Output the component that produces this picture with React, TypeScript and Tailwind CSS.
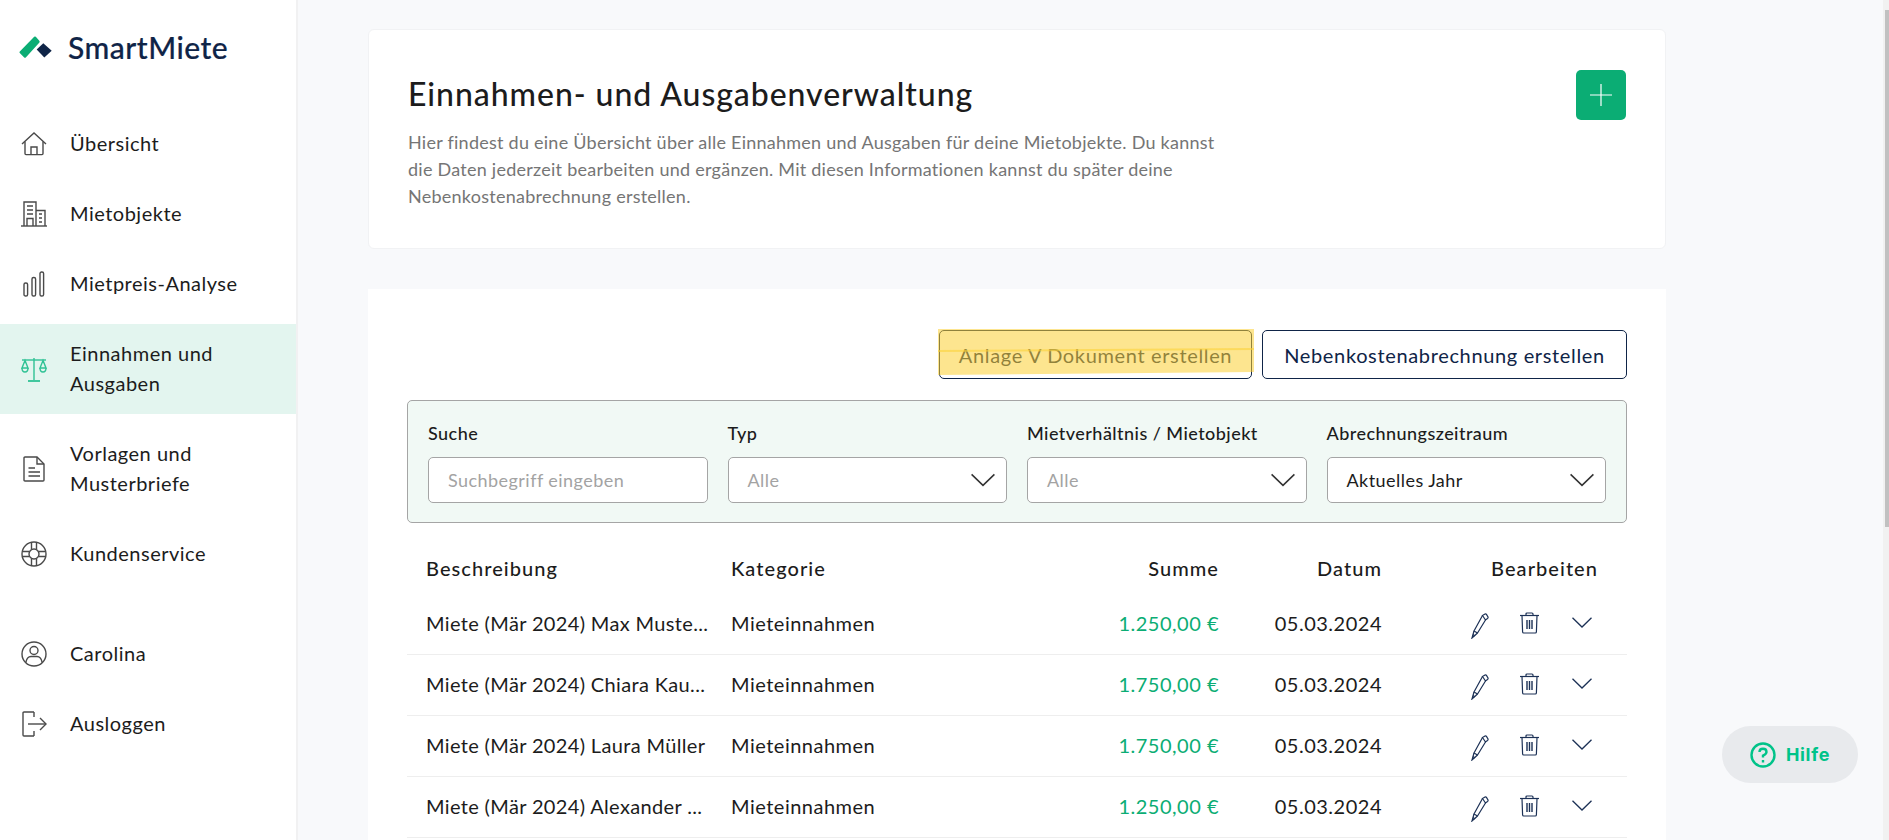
const font = "[font-family:Lato,'Noto_Sans',sans-serif]";

function Chevron({ className }: { className?: string }) {
  return (
    <svg viewBox="0 0 20 11" fill="none" stroke="currentColor" strokeWidth="1.3" className={className}>
      <path d="M0.5 0.8 L10 10 L19.5 0.8" />
    </svg>
  );
}

function HomeIcon() {
  return (
    <svg width="26" height="24" viewBox="0 0 26 24" fill="none" stroke="#4a4a4a" strokeWidth="1.4">
      <path d="M1 12 L13 1 L25 12" />
      <path d="M4 9.5 V21.5 Q4 22.6 5 22.6 H21 Q22 22.6 22 21.5 V9.5" />
      <path d="M10 22.6 V15 H16 V22.6" />
    </svg>
  );
}

function BuildingIcon() {
  return (
    <svg width="26" height="26" viewBox="0 0 26 26" fill="none" stroke="#4a4a4a" strokeWidth="1.4">
      <path d="M0 25 H26" />
      <path d="M3 25 V1 H15 V25" />
      <path d="M15 9.5 H24 V25" />
      <path d="M6 5 H12 M6 9 H12 M6 13 H12" />
      <path d="M6 25 V17.5 H12 V25" />
      <path d="M18 13 H21 M18 17 H21 M18 21 H21" />
    </svg>
  );
}

function BarsIcon() {
  return (
    <svg width="22" height="26" viewBox="0 0 22 26" fill="none" stroke="#4a4a4a" strokeWidth="1.4" className="ml-[2px]">
      <rect x="1" y="12" width="3.6" height="13" rx="1.6" />
      <rect x="9" y="6.5" width="3.6" height="18.5" rx="1.6" />
      <rect x="17" y="1" width="3.6" height="24" rx="1.6" />
    </svg>
  );
}

function ScaleIcon() {
  return (
    <svg width="26" height="25" viewBox="0 0 26 25" fill="none" stroke="#2fc295" strokeWidth="1.4">
      <path d="M13 1 V23" />
      <path d="M1 3 H25" />
      <path d="M7 24 H19" strokeWidth="1.8" />
      <path d="M4 3.5 L1 11 H7 Z M22 3.5 L19 11 H25 Z" />
      <path d="M1 11 Q1 15 4 15 Q7 15 7 11 M19 11 Q19 15 22 15 Q25 15 25 11" />
    </svg>
  );
}

function FileIcon() {
  return (
    <svg width="22" height="26" viewBox="0 0 22 26" fill="none" stroke="#4a4a4a" strokeWidth="1.4" className="ml-[2px]">
      <path d="M2 1 H14 L21 8 V24 Q21 25 20 25 H2 Q1 25 1 24 V2 Q1 1 2 1 Z" />
      <path d="M14 1 V8 H21" />
      <path d="M5.5 12 H12 M5.5 16 H17 M5.5 20 H17" />
    </svg>
  );
}

function LifeIcon() {
  return (
    <svg width="26" height="26" viewBox="0 0 26 26" fill="none" stroke="#4a4a4a" strokeWidth="1.4">
      <circle cx="13" cy="13" r="12" />
      <circle cx="13" cy="13" r="5" />
      <path d="M10.5 1.5 V8.5 M15.5 1.5 V8.5 M10.5 17.5 V24.5 M15.5 17.5 V24.5 M1.5 10.5 H8.5 M1.5 15.5 H8.5 M17.5 10.5 H24.5 M17.5 15.5 H24.5" />
    </svg>
  );
}

function UserIcon() {
  return (
    <svg width="26" height="26" viewBox="0 0 26 26" fill="none" stroke="#4a4a4a" strokeWidth="1.4">
      <circle cx="13" cy="13" r="12" />
      <circle cx="13" cy="9.5" r="4" />
      <path d="M4.8 21.5 Q6 15.5 10 15.5 H16 Q20 15.5 21.2 21.5" />
    </svg>
  );
}

function LogoutIcon() {
  return (
    <svg width="25" height="26" viewBox="0 0 25 26" fill="none" stroke="#4a4a4a" strokeWidth="1.4" className="ml-[1px]">
      <path d="M12 1 H2 Q1 1 1 2 V24 Q1 25 2 25 H12" />
      <path d="M6 13 H24" />
      <path d="M18 7 L24 13 L18 19" />
      <path d="M12 1 V6 M12 20 V25" />
    </svg>
  );
}

function PencilIcon() {
  return (
    <svg width="18" height="26" viewBox="0 0 18 26" fill="none" stroke="#1c3156" strokeWidth="1.2">
      <path d="M11.5 2.5 L14 1 Q15 0.6 15.6 1.6 L17 4 Q17.3 5 16.5 5.6 L14.5 7 Z" />
      <path d="M11.5 2.5 L3 18 L6.5 20 L14.5 7" />
      <path d="M3 18 L1 25 L6.5 20" />
      <path d="M2 21.5 L4 23" />
    </svg>
  );
}

function TrashIcon() {
  return (
    <svg width="19" height="22" viewBox="0 0 19 22" fill="none" stroke="#1c3156" strokeWidth="1.2">
      <path d="M0 3.5 H19" />
      <path d="M6 3.5 V2 Q6 1 7 1 H12 Q13 1 13 2 V3.5" />
      <path d="M2 3.5 L2.6 20 Q2.7 21 3.7 21 H15.3 Q16.3 21 16.4 20 L17 3.5" />
      <path d="M7 8 V17 M9.5 8 V17 M12 8 V17" strokeWidth="1.4" />
    </svg>
  );
}

const rows = [
  ['Miete (Mär 2024) Max Muste...', '1.250,00 €'],
  ['Miete (Mär 2024) Chiara Kau...', '1.750,00 €'],
  ['Miete (Mär 2024) Laura Müller', '1.750,00 €'],
  ['Miete (Mär 2024) Alexander ...', '1.250,00 €'],
];

function NavItem({ icon, label, active }: { icon: React.ReactNode; label: React.ReactNode; active?: boolean }) {
  return (
    <div className={`flex items-center py-[15px] ${active ? 'bg-[#e3f5ef]' : ''}`}>
      <div className="w-[70px] pl-[21px] shrink-0 flex">{icon}</div>
      <div className="-translate-y-px text-[20px] leading-[30px] text-[#1c1c1c] tracking-[0.5px]">{label}</div>
    </div>
  );
}

export default function App() {
  return (
    <div className={`flex h-screen overflow-hidden bg-[#f8f9fb] ${font}`}>
      {/* Sidebar */}
      <aside className="w-[298px] shrink-0 bg-white border-r-2 border-[#f1f1f2] h-full">
        <div className="h-[114px] flex items-start pt-[32px] pl-[19px]">
          <svg width="33" height="23" viewBox="0 0 33 23" className="mt-[4px]">
            <path d="M15.2 0.8 Q16 0 16.8 0.8 L20.5 5 Q21 6 20.2 6.8 L6.8 21.4 Q6 22.2 5.2 21.4 L0.8 17 Q0 16.2 0.8 15.4 Z" fill="#0bad74" />
            <path d="M24.3 7.3 L32.7 14.7 L25.3 21.5 L17.7 13.5 Z" fill="#0f2447" />
          </svg>
          <span className="ml-[16px] text-[30px] leading-[30px] font-medium text-[#0f2447] tracking-[0.5px] [-webkit-text-stroke:0.2px_#0f2447]">SmartMiete</span>
        </div>
        <nav className="flex flex-col gap-2.5">
          <NavItem icon={<HomeIcon />} label="Übersicht" />
          <NavItem icon={<BuildingIcon />} label="Mietobjekte" />
          <NavItem icon={<BarsIcon />} label="Mietpreis-Analyse" />
          <NavItem icon={<ScaleIcon />} label={<>Einnahmen und<br />Ausgaben</>} active />
          <NavItem icon={<FileIcon />} label={<>Vorlagen und<br />Musterbriefe</>} />
          <NavItem icon={<LifeIcon />} label="Kundenservice" />
          <div className="h-[20px]" />
          <NavItem icon={<UserIcon />} label="Carolina" />
          <NavItem icon={<LogoutIcon />} label="Ausloggen" />
        </nav>
      </aside>

      {/* Main */}
      <main className="flex-1 min-w-0 pl-[70px] pt-[29px] relative">
        <div className="w-[1298px]">
          <section className="h-[220px] bg-white rounded-[6px] border border-[#f1f2f4] px-[39px] pt-[40px] flex justify-between">
            <div>
              <h1 className="mt-[4px] text-[32px] leading-[40px] font-medium text-[#1c1c1c] tracking-[0.95px]">Einnahmen- und Ausgabenverwaltung</h1>
              <p className="mt-[15px] w-[830px] text-[18px] leading-[27px] text-[#757575] tracking-[0.25px]">
                Hier findest du eine Übersicht über alle Einnahmen und Ausgaben für deine Mietobjekte. Du kannst die Daten jederzeit bearbeiten und ergänzen. Mit diesen Informationen kannst du später deine Nebenkostenabrechnung erstellen.
              </p>
            </div>
            <button className="w-[50px] h-[50px] bg-[#0bad74] rounded-[5px] flex items-center justify-center">
              <svg width="22" height="22" viewBox="0 0 22 22" stroke="#fff" strokeWidth="1.2">
                <path d="M11 0 V22 M0 11 H22" />
              </svg>
            </button>
          </section>

          <section className="mt-[40px] bg-white h-[600px] pt-[41px] px-[39px]">
            <div className="flex justify-end gap-[10px]">
              <button className="relative w-[313px] h-[49px] rounded-[5px] border border-[#0f2447] text-[20px] text-[#0f2447] tracking-[0.65px] bg-white">
                Anlage V Dokument erstellen
                {/* Textmarker drawn over the button */}
                <svg className="absolute -left-[2px] -top-[3px]" width="316" height="50" viewBox="0 0 316 50">
                  <path d="M0 1 H316 V44 L0 47 Z" fill="#fbcf33" fillOpacity="0.55" />
                  <path d="M0 23 L316 21" stroke="#fbd23a" strokeOpacity="0.6" strokeWidth="2" />
                </svg>
              </button>
              <button className="w-[365px] h-[49px] rounded-[5px] border border-[#0f2447] text-[20px] text-[#0f2447] tracking-[0.65px] bg-white">
                Nebenkostenabrechnung erstellen
              </button>
            </div>

            <div className="mt-[21px] h-[123px] bg-[#f1f9f5] border border-[#a5a5a5] rounded-[5px] px-[20px] pt-[20px] grid grid-cols-4 gap-x-[20px]">
              {[
                { label: 'Suche', value: 'Suchbegriff eingeben', chevron: false, dark: false },
                { label: 'Typ', value: 'Alle', chevron: true, dark: false },
                { label: 'Mietverhältnis / Mietobjekt', value: 'Alle', chevron: true, dark: false },
                { label: 'Abrechnungszeitraum', value: 'Aktuelles Jahr', chevron: true, dark: true },
              ].map((f) => (
                <div key={f.label}>
                  <div className="text-[18px] leading-[24px] font-medium text-[#1c1c1c] tracking-[0.45px]">{f.label}</div>
                  <div className="mt-[12px] h-[46px] bg-white border border-[#a5a5a5] rounded-[5px] flex items-center justify-between pl-[19px] pr-[11px]">
                    <span className={`text-[18px] tracking-[0.45px] ${f.dark ? 'text-[#1c1c1c]' : 'text-[#a3a3a3]'}`}>{f.value}</span>
                    {f.chevron && <Chevron className="w-[24px] h-[14px] text-[#333]" />}
                  </div>
                </div>
              ))}
            </div>

            <div className="mt-[29px] h-[32px] flex items-center text-[20px] font-medium text-[#1c1c1c] tracking-[1.05px] pl-[19px]">
              <div className="w-[305px]">Beschreibung</div>
              <div className="w-[200px]">Kategorie</div>
              <div className="w-[288px] text-right">Summe</div>
              <div className="w-[163px] text-right">Datum</div>
              <div className="w-[216px] text-right">Bearbeiten</div>
            </div>

            <div className="mt-[10px]">
              {rows.map(([name, sum]) => (
                <div key={name} className="h-[61px] border-b border-[#eeeeee] flex items-center pb-[2px] text-[20px] text-[#1c1c1c] tracking-[0.5px] pl-[19px]">
                  <div className="w-[305px] whitespace-nowrap tracking-[0.35px]">{name}</div>
                  <div className="w-[200px]">Mieteinnahmen</div>
                  <div className="w-[288px] text-right text-[#0bad74]">{sum}</div>
                  <div className="w-[163px] text-right">05.03.2024</div>
                  <div className="ml-[89px] flex items-center -mt-[2px]">
                    <div className="w-[49px] mt-[7px]"><PencilIcon /></div>
                    <div className="mt-[1px] flex"><TrashIcon /></div>
                    <Chevron className="ml-[33px] w-[20px] h-[11px] text-[#1c3156]" />
                  </div>
                </div>
              ))}
            </div>
          </section>
        </div>

        <button className="absolute right-[25px] top-[726px] w-[136px] h-[57px] rounded-full bg-[#e8eaed] flex items-center justify-center gap-[10px] [font-family:Inter,sans-serif] text-[18px] font-bold text-[#00c389] tracking-[0.7px]">
          <svg width="26" height="26" viewBox="0 0 26 26" fill="none" stroke="#00c389" strokeWidth="2.4">
            <circle cx="13" cy="13" r="11.5" />
            <path d="M9.5 10 Q9.5 6.8 13 6.8 Q16.5 6.8 16.5 10 Q16.5 12 13 13.5 V15.5" />
            <path d="M13 18 V20.5" />
          </svg>
          Hilfe
        </button>
      </main>

      {/* Scrollbar */}
      <div className="w-[6px] shrink-0 bg-[#f1f1f1] pt-[10px] pl-[2px]">
        <div className="h-[517px] bg-[#c1c1c1]" />
      </div>
    </div>
  );
}
